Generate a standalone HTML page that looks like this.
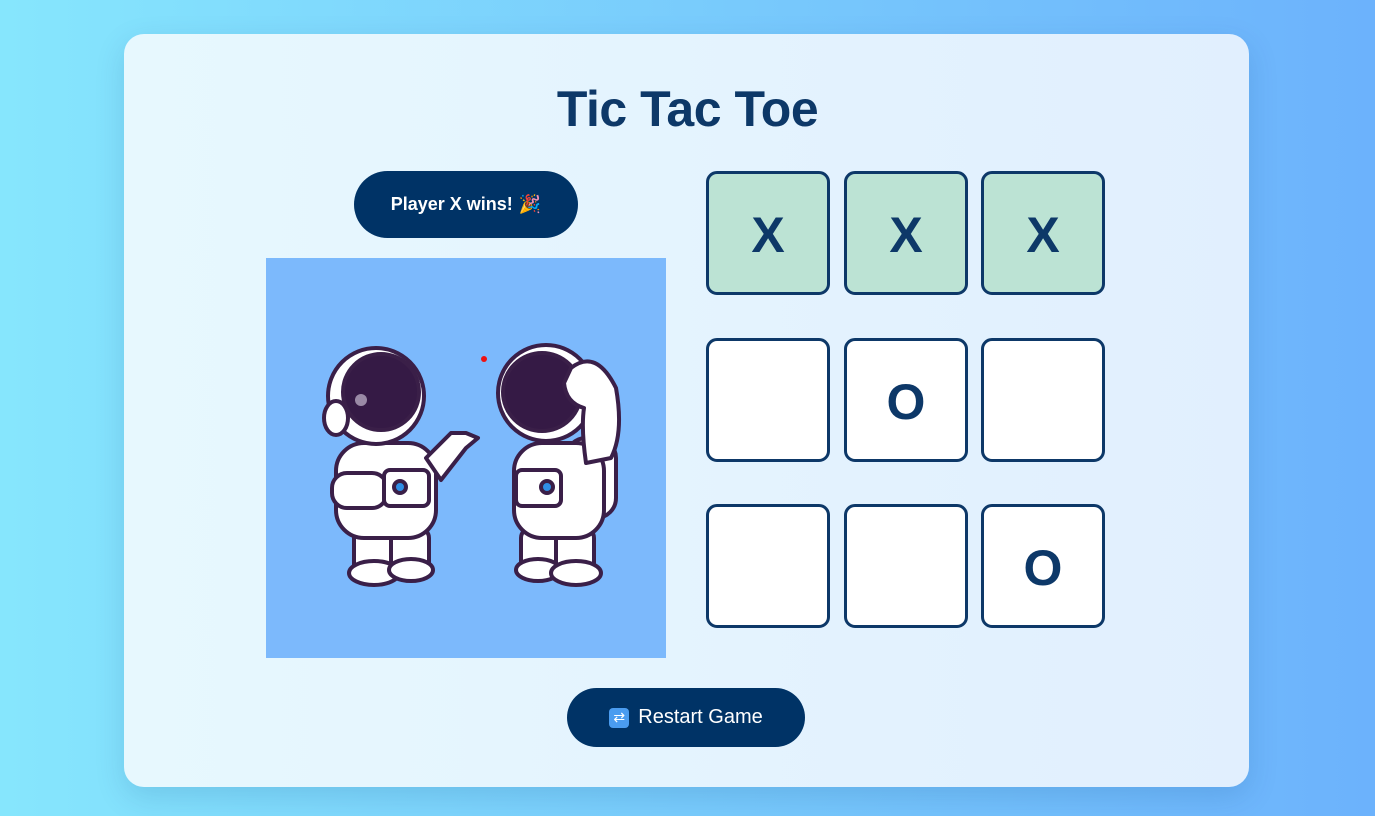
<!DOCTYPE html>
<html><head><meta charset="utf-8"><style>
*{margin:0;padding:0;box-sizing:border-box}
html,body{width:1375px;height:816px;overflow:hidden}
body{background:linear-gradient(90deg,#86e6fd,#6cb2fc);font-family:"Liberation Sans",sans-serif;position:relative}
.card{position:absolute;left:124px;top:34px;width:1125px;height:753px;border-radius:20px;background:linear-gradient(90deg,#e7f8fe,#e1effe);box-shadow:0 10px 30px rgba(0,60,120,.15)}
h1{position:absolute;left:0;width:1375px;top:80px;text-align:center;font-size:50px;font-weight:bold;color:#0d3868;letter-spacing:-0.5px}
.pill{position:absolute;left:354px;top:171px;width:224px;height:67px;border-radius:34px;background:#003366;color:#fff;font-weight:bold;font-size:18px;display:flex;align-items:center;justify-content:center;gap:6px}
.img{position:absolute;left:266px;top:258px;width:400px;height:400px;background:#7cb9fc}
.cell{position:absolute;width:124px;height:124px;border:3px solid #0d3868;border-radius:11px;background:#fff;color:#0d3868;font-weight:bold;font-size:50px;display:flex;align-items:center;justify-content:center;padding-top:4px}
.w{background:#bce3d4}
.btn{position:absolute;left:567px;top:688px;width:238px;height:59px;border-radius:30px;background:#003366;color:#fff;font-size:20px;display:flex;align-items:center;justify-content:center;gap:9px}
.ic{width:20px;height:20px;border-radius:4px;background:#4a9cf0;color:#fff;font-size:14px;display:flex;align-items:center;justify-content:center}
</style></head><body>
<div class="card"></div>
<h1>Tic Tac Toe</h1>
<div class="pill">Player X wins! <span>🎉</span></div>
<div class="img"><svg width="400" height="400" viewBox="0 0 400 400" stroke="#3a1f48" stroke-width="4" stroke-linejoin="round">
<circle cx="218" cy="101" r="3" fill="#e11" stroke="none"/>
<rect x="88" y="270" width="40" height="50" rx="10" fill="#fff"/>
<rect x="125" y="270" width="38" height="50" rx="10" fill="#fff"/>
<ellipse cx="108" cy="315" rx="25" ry="12" fill="#fff"/>
<ellipse cx="145" cy="312" rx="22" ry="11" fill="#fff"/>
<rect x="70" y="185" width="100" height="95" rx="28" fill="#fff"/>
<path d="M160 200 L185 175 L200 175 L212 180 L200 190 L175 222 Z" fill="#fff"/>
<rect x="66" y="215" width="55" height="35" rx="15" fill="#fff"/>
<rect x="118" y="212" width="45" height="36" rx="6" fill="#fff"/>
<circle cx="134" cy="229" r="6" fill="#2f8ee6"/>
<circle cx="110" cy="138" r="48" fill="#fff"/>
<circle cx="115" cy="134" r="38" fill="#351a45"/>
<ellipse cx="70" cy="160" rx="12" ry="17" fill="#fff"/>
<circle cx="95" cy="142" r="6" fill="#9a8aa6" stroke="none"/>
<rect x="255" y="270" width="38" height="50" rx="10" fill="#fff"/>
<rect x="290" y="270" width="38" height="50" rx="10" fill="#fff"/>
<ellipse cx="272" cy="312" rx="22" ry="11" fill="#fff"/>
<ellipse cx="310" cy="315" rx="25" ry="12" fill="#fff"/>
<rect x="300" y="180" width="50" height="80" rx="20" fill="#fff"/>
<rect x="248" y="185" width="90" height="95" rx="28" fill="#fff"/>
<rect x="250" y="212" width="45" height="36" rx="6" fill="#fff"/>
<circle cx="281" cy="229" r="6" fill="#2f8ee6"/>
<circle cx="280" cy="135" r="48" fill="#fff"/>
<circle cx="276" cy="134" r="39" fill="#351a45"/>
<path d="M305 110 Q330 90 350 130 Q358 175 345 200 L320 205 Q315 170 318 150 Q300 145 298 125 Z" fill="#fff"/>
</svg></div>
<div class="cell w" style="left:706px;top:171px">X</div>
<div class="cell w" style="left:844px;top:171px">X</div>
<div class="cell w" style="left:981px;top:171px">X</div>
<div class="cell" style="left:706px;top:338px"></div>
<div class="cell" style="left:844px;top:338px">O</div>
<div class="cell" style="left:981px;top:338px"></div>
<div class="cell" style="left:706px;top:504px"></div>
<div class="cell" style="left:844px;top:504px"></div>
<div class="cell" style="left:981px;top:504px">O</div>
<div class="btn"><span class="ic">⇄</span>Restart Game</div>
</body></html>
